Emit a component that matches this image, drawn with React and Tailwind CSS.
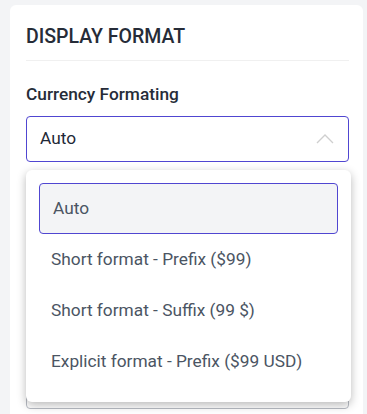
import React from 'react';

const options = [
  'Auto',
  'Short format - Prefix ($99)',
  'Short format - Suffix (99 $)',
  'Explicit format - Prefix ($99 USD)',
];

// ── Chevron for the open select ──
function ChevronUp() {
  return (
    <svg width="18" height="10" viewBox="0 0 18 10" fill="none">
      <path d="M1 9L9 1L17 9" stroke="#cfcfcf" strokeWidth="1.3" />
    </svg>
  );
}

export default function App() {
  const selected = 'Auto';

  return (
    <div
      className="h-[414px] overflow-hidden bg-[#f3f4f6] pl-[10px] pr-[4px] pt-[5px]"
      style={{ fontFamily: 'Roboto, "Noto Sans", sans-serif' }}
    >
      <div className="h-[420px] rounded-t-md bg-white pl-4 pr-[14px] pt-[20px]">
        {/* Section header */}
        <h2 className="text-[19.5px] font-medium leading-6 text-[#262c38] pb-[11px] border-b border-[#f0f0f0]">
          DISPLAY FORMAT
        </h2>

        {/* Currency field */}
        <div className="pt-[21px]">
          <label className="block text-[17.3px] font-medium leading-6 text-[#262c38] mb-[10px]">
            Currency Formating
          </label>
          <div className="relative">
            <button
              type="button"
              className="flex h-[46px] w-full items-center justify-between rounded border border-[#5046d1] bg-white pl-[13px] pr-[14px] text-left text-[17.3px] text-[#1f2937]"
            >
              <span>{selected}</span>
              <ChevronUp />
            </button>

            {/* Open dropdown */}
            <div className="absolute left-0 top-[54px] z-10 w-[325px] rounded-md bg-white p-[13px] pb-[15px] shadow-[0_3px_10px_rgba(0,0,0,0.28)]">
              {options.map((opt) => {
                const active = opt === selected;
                return (
                  <div
                    key={opt}
                    className={`flex h-[51px] items-center rounded text-[17.3px] text-[#4b5563] ${active ? 'bg-[#f3f4f6] border border-[#5046d1] pl-[13px]' : 'pl-[12px]'}`}
                  >
                    {opt}
                  </div>
                );
              })}
            </div>
          </div>
        </div>

        {/* Next field, hidden under the dropdown */}
        <div className="mt-[201px] h-[46px] rounded border border-[#b8bcc4] bg-white" />
      </div>
    </div>
  );
}
